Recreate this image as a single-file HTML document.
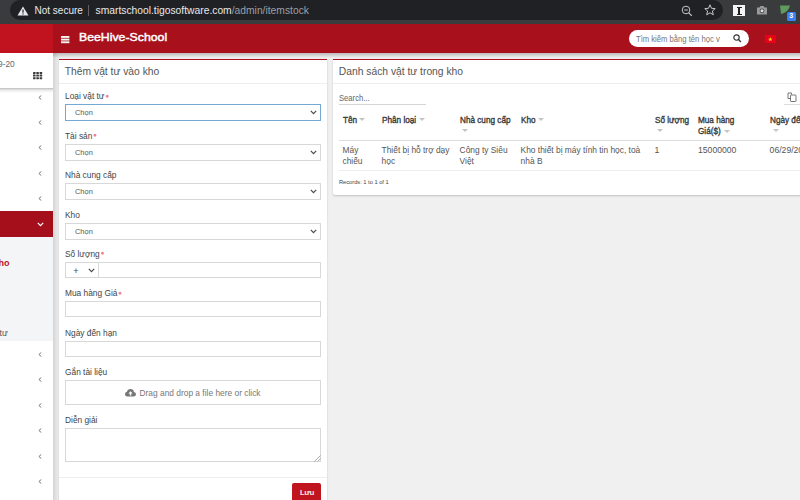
<!DOCTYPE html>
<html><head><meta charset="utf-8">
<style>
*{box-sizing:border-box;margin:0;padding:0}
html,body{width:800px;height:500px;overflow:hidden;background:#f0f0f0;font-family:"Liberation Sans",sans-serif;color:#555}
.a{position:absolute;white-space:nowrap}
.panel{background:#fff;border-top:1.5px solid #ad0f1d;border-radius:0 0 2px 2px;box-shadow:0 1px 2px rgba(0,0,0,.2)}
.sep{height:1px;background:#eee}
.lbl{font-size:8.3px;color:#444}
.req{color:#f08090;font-size:6.5px;position:relative;top:-1.5px;left:1px}
.inp{background:#fff;border:1px solid #d8d8d8;border-radius:0}
.sel{font-size:8px;color:#555}
.th{color:#383838;-webkit-text-stroke:.35px #383838;transform-origin:0 0}
.td{font-size:8.4px;color:#555;line-height:11.4px}
.caret{width:0;height:0;border-left:3px solid transparent;border-right:3px solid transparent;border-top:3px solid #c4c4c4}
</style></head><body>
<div class="a" style="left:0;top:0;width:800px;height:23.5px;background:#3a3b3c"></div>
<div class="a" style="left:10px;top:-0.5px;width:713px;height:20px;background:#202124;border-radius:10px"></div>
<svg class="a" style="left:17px;top:5.5px" width="12" height="10" viewBox="0 0 12 10"><path d="M6 0.5 L11.5 9.5 L0.5 9.5 Z" fill="#e8eaed"/><rect x="5.4" y="3.5" width="1.2" height="3.2" fill="#202124"/><rect x="5.4" y="7.4" width="1.2" height="1.1" fill="#202124"/></svg>
<div class="a" style="left:34.5px;top:5.09px;font-size:10px;color:#e8eaed;">Not secure</div>
<div class="a" style="left:88px;top:4.5px;width:1px;height:11px;background:#5f6368"></div>
<div class="a" style="left:95.5px;top:4.81px;font-size:10.3px;color:#e8eaed;">smartschool.tigosoftware.com<span style="color:#9aa0a6">/admin/itemstock</span></div>
<svg class="a" style="left:680.5px;top:4.5px" width="12" height="12" viewBox="0 0 12 12"><circle cx="5" cy="5" r="3.8" stroke="#c4c7c5" stroke-width="1" fill="none"/><line x1="3.2" y1="5" x2="6.8" y2="5" stroke="#c4c7c5" stroke-width="1"/><line x1="7.8" y1="7.8" x2="10.8" y2="10.8" stroke="#c4c7c5" stroke-width="1.2"/></svg>
<svg class="a" style="left:704px;top:4px" width="12" height="12" viewBox="0 0 12 12"><path d="M6 .8 L7.5 4.3 L11.2 4.6 L8.4 7 L9.3 10.8 L6 8.8 L2.7 10.8 L3.6 7 L.8 4.6 L4.5 4.3 Z" stroke="#c4c7c5" stroke-width="1" fill="none" stroke-linejoin="round"/></svg>
<div class="a" style="left:733px;top:5px;width:11.5px;height:11px;background:#f4f4f4"></div>
<div class="a" style="left:738.3px;top:6.5px;width:1.5px;height:8px;background:#222"></div>
<div class="a" style="left:736.5px;top:6.5px;width:5px;height:1px;background:#222"></div>
<div class="a" style="left:736.5px;top:13.8px;width:5px;height:1px;background:#222"></div>
<svg class="a" style="left:756px;top:5px" width="12" height="10" viewBox="0 0 12 10"><path d="M1 2.5 h2.5 l1-1.5 h3 l1 1.5 h2.5 v7 h-10 z" fill="#9a9a9a"/><circle cx="6" cy="5.8" r="2.4" fill="#4a4a4a"/><circle cx="6" cy="5.8" r="1.5" fill="#e0e0e0"/></svg>
<svg class="a" style="left:779px;top:5px" width="12" height="10" viewBox="0 0 12 10"><path d="M1 0.5 L11 0.5 Q9 8 2 9 Z" fill="#5f9a5f"/></svg>
<div class="a" style="left:787px;top:12px;width:8.5px;height:8.5px;background:#3b82f0;border-radius:1.5px;color:#fff;font-size:7px;line-height:8.5px;text-align:center;font-weight:bold">3</div>
<div class="a" style="left:0;top:23.5px;width:53px;height:29.5px;background:#c0131f"></div>
<div class="a" style="left:53px;top:23.5px;width:747px;height:29.5px;background:#a8111c"></div>
<svg class="a" style="left:61.2px;top:35.8px" width="9" height="8" viewBox="0 0 9 8"><rect x="0" y="0" width="8.4" height="1.9" fill="#f4f4f4"/><rect x="0" y="2.65" width="8.4" height="1.9" fill="#f4f4f4"/><rect x="0" y="5.3" width="8.4" height="1.9" fill="#f4f4f4"/></svg>
<div class="a" style="left:79.4px;top:30.12px;font-size:11.6px;color:#fff;-webkit-text-stroke:.45px #fff;transform:scaleX(1.06);transform-origin:0 0">BeeHive-School</div>
<div class="a" style="left:628.5px;top:30px;width:120px;height:16.5px;background:#fff;border-radius:9px"></div>
<div class="a" style="left:635.8px;top:33.99px;font-size:8.7px;color:#757575;transform:scaleX(.88);transform-origin:0 0">Tìm kiếm bằng tên học v</div>
<svg class="a" style="left:733px;top:33.5px" width="9" height="9" viewBox="0 0 9 9"><circle cx="3.5" cy="3.5" r="2.7" stroke="#333" stroke-width="1.15" fill="none"/><line x1="5.5" y1="5.5" x2="7.9" y2="7.9" stroke="#333" stroke-width="1.35"/></svg>
<div class="a" style="left:765px;top:34.8px;width:11.2px;height:8.2px;background:#e6001a"></div>
<svg class="a" style="left:768.4px;top:36.7px" width="4.6" height="4.6" viewBox="0 0 10 10"><path d="M5 0 L6.2 3.6 L10 3.6 L6.9 5.9 L8.1 9.5 L5 7.3 L1.9 9.5 L3.1 5.9 L0 3.6 L3.8 3.6 Z" fill="#ffde00"/></svg>
<div class="a" style="left:0;top:53px;width:53px;height:447px;background:#fff"></div>
<div class="a" style="left:53px;top:53px;width:6px;height:447px;background:linear-gradient(90deg,#d4d4d4,#f0f0f0)"></div>
<div class="a" style="left:0;top:88px;width:53px;height:4.5px;background:linear-gradient(rgba(0,0,0,.25),rgba(0,0,0,.07) 50%,rgba(0,0,0,0))"></div>
<div class="a" style="left:53px;top:53px;width:747px;height:5px;background:linear-gradient(rgba(0,0,0,.22),rgba(0,0,0,0))"></div>
<div class="a" style="left:-1.8px;top:58.50px;font-size:8.8px;color:#666;transform:scaleX(.95);transform-origin:0 0">9-20</div>
<svg class="a" style="left:32.7px;top:71.8px" width="10" height="8" viewBox="0 0 10 8"><g fill="#3a3a3a"><rect x="0.0" y="0.0" width="2.6" height="2" rx=".4"/><rect x="3.3" y="0.0" width="2.6" height="2" rx=".4"/><rect x="6.6" y="0.0" width="2.6" height="2" rx=".4"/><rect x="0.0" y="2.6" width="2.6" height="2" rx=".4"/><rect x="3.3" y="2.6" width="2.6" height="2" rx=".4"/><rect x="6.6" y="2.6" width="2.6" height="2" rx=".4"/><rect x="0.0" y="5.2" width="2.6" height="2" rx=".4"/><rect x="3.3" y="5.2" width="2.6" height="2" rx=".4"/><rect x="6.6" y="5.2" width="2.6" height="2" rx=".4"/></g></svg>
<svg class="a" style="left:37.7px;top:94.5px" width="4" height="5" viewBox="0 0 4 5"><path d="M3.3 .5 L.9 2.5 L3.3 4.5" stroke="#777" stroke-width="1" fill="none"/></svg>
<svg class="a" style="left:37.7px;top:119.7px" width="4" height="5" viewBox="0 0 4 5"><path d="M3.3 .5 L.9 2.5 L3.3 4.5" stroke="#777" stroke-width="1" fill="none"/></svg>
<svg class="a" style="left:37.7px;top:144.9px" width="4" height="5" viewBox="0 0 4 5"><path d="M3.3 .5 L.9 2.5 L3.3 4.5" stroke="#777" stroke-width="1" fill="none"/></svg>
<svg class="a" style="left:37.7px;top:170.9px" width="4" height="5" viewBox="0 0 4 5"><path d="M3.3 .5 L.9 2.5 L3.3 4.5" stroke="#777" stroke-width="1" fill="none"/></svg>
<svg class="a" style="left:37.7px;top:196.3px" width="4" height="5" viewBox="0 0 4 5"><path d="M3.3 .5 L.9 2.5 L3.3 4.5" stroke="#777" stroke-width="1" fill="none"/></svg>
<svg class="a" style="left:37.7px;top:351.8px" width="4" height="5" viewBox="0 0 4 5"><path d="M3.3 .5 L.9 2.5 L3.3 4.5" stroke="#777" stroke-width="1" fill="none"/></svg>
<svg class="a" style="left:37.7px;top:377.3px" width="4" height="5" viewBox="0 0 4 5"><path d="M3.3 .5 L.9 2.5 L3.3 4.5" stroke="#777" stroke-width="1" fill="none"/></svg>
<svg class="a" style="left:37.7px;top:402.8px" width="4" height="5" viewBox="0 0 4 5"><path d="M3.3 .5 L.9 2.5 L3.3 4.5" stroke="#777" stroke-width="1" fill="none"/></svg>
<svg class="a" style="left:37.7px;top:428.3px" width="4" height="5" viewBox="0 0 4 5"><path d="M3.3 .5 L.9 2.5 L3.3 4.5" stroke="#777" stroke-width="1" fill="none"/></svg>
<svg class="a" style="left:37.7px;top:453.8px" width="4" height="5" viewBox="0 0 4 5"><path d="M3.3 .5 L.9 2.5 L3.3 4.5" stroke="#777" stroke-width="1" fill="none"/></svg>
<svg class="a" style="left:37.7px;top:479.3px" width="4" height="5" viewBox="0 0 4 5"><path d="M3.3 .5 L.9 2.5 L3.3 4.5" stroke="#777" stroke-width="1" fill="none"/></svg>
<div class="a" style="left:0;top:211px;width:53px;height:26px;background:#a50f1c"></div>
<svg class="a" style="left:37px;top:222px" width="7" height="5" viewBox="0 0 7 5"><path d="M.8 .8 L3.5 3.6 L6.2 .8" stroke="#fff" stroke-width="1.2" fill="none"/></svg>
<div class="a" style="left:0;top:237px;width:53px;height:104px;background:#f4f5f7"></div>
<div class="a" style="left:-1.5px;top:257.71px;font-size:9px;color:#bd1424;font-weight:bold">ho</div>
<div class="a" style="left:-0.5px;top:327.99px;font-size:8.7px;color:#555;">tư</div>
<div class="a panel" style="left:59px;top:59px;width:268px;height:460px"></div>
<div class="a" style="left:64.8px;top:66.11px;font-size:10.3px;color:#555;">Thêm vật tư vào kho</div>
<div class="a sep" style="left:59px;top:83px;width:268px"></div>
<div class="a" style="left:64.8px;top:91.19px;font-size:8.7px;color:#444;transform:scaleX(.96);transform-origin:0 0">Loại vật tư<span class="req">●</span></div>
<div class="a inp" style="left:64.6px;top:104.2px;width:256.2px;height:16.4px;border-color:#74a9d6"></div>
<div class="a" style="left:74.5px;top:107.63px;font-size:8px;color:#555;transform:scaleX(.93);transform-origin:0 0">Chọn</div>
<svg class="a" style="left:310.4px;top:109.7px" width="7" height="5" viewBox="0 0 7 5"><path d="M.8 .9 L3.5 3.7 L6.2 .9" stroke="#4a4a4a" stroke-width="1.2" fill="none"/></svg>
<div class="a" style="left:64.8px;top:130.99px;font-size:8.7px;color:#444;transform:scaleX(.96);transform-origin:0 0">Tài sản<span class="req">●</span></div>
<div class="a inp" style="left:64.6px;top:144.2px;width:256.2px;height:16.4px;border-color:#d8d8d8"></div>
<div class="a" style="left:74.5px;top:147.63px;font-size:8px;color:#555;transform:scaleX(.93);transform-origin:0 0">Chọn</div>
<svg class="a" style="left:310.4px;top:149.7px" width="7" height="5" viewBox="0 0 7 5"><path d="M.8 .9 L3.5 3.7 L6.2 .9" stroke="#4a4a4a" stroke-width="1.2" fill="none"/></svg>
<div class="a" style="left:64.8px;top:169.99px;font-size:8.7px;color:#444;transform:scaleX(.96);transform-origin:0 0">Nhà cung cấp</div>
<div class="a inp" style="left:64.6px;top:183.3px;width:256.2px;height:16.4px;border-color:#d8d8d8"></div>
<div class="a" style="left:74.5px;top:186.73px;font-size:8px;color:#555;transform:scaleX(.93);transform-origin:0 0">Chọn</div>
<svg class="a" style="left:310.4px;top:188.8px" width="7" height="5" viewBox="0 0 7 5"><path d="M.8 .9 L3.5 3.7 L6.2 .9" stroke="#4a4a4a" stroke-width="1.2" fill="none"/></svg>
<div class="a" style="left:64.8px;top:209.99px;font-size:8.7px;color:#444;transform:scaleX(.96);transform-origin:0 0">Kho</div>
<div class="a inp" style="left:64.6px;top:223.2px;width:256.2px;height:16.4px;border-color:#d8d8d8"></div>
<div class="a" style="left:74.5px;top:226.63px;font-size:8px;color:#555;transform:scaleX(.93);transform-origin:0 0">Chọn</div>
<svg class="a" style="left:310.4px;top:228.7px" width="7" height="5" viewBox="0 0 7 5"><path d="M.8 .9 L3.5 3.7 L6.2 .9" stroke="#4a4a4a" stroke-width="1.2" fill="none"/></svg>
<div class="a" style="left:64.8px;top:248.99px;font-size:8.7px;color:#444;transform:scaleX(.96);transform-origin:0 0">Số lượng<span class="req">●</span></div>
<div class="a inp" style="left:64.6px;top:262.2px;width:256.2px;height:15.6px"></div>
<div class="a" style="left:98.3px;top:262.7px;width:1px;height:14.6px;background:#d8d8d8"></div>
<div class="a" style="left:73.3px;top:265.71px;font-size:9px;color:#444;">+</div>
<svg class="a" style="left:88.1px;top:267.8px" width="7" height="5" viewBox="0 0 7 5"><path d="M.8 .9 L3.5 3.7 L6.2 .9" stroke="#4a4a4a" stroke-width="1.2" fill="none"/></svg>
<div class="a" style="left:64.8px;top:288.19px;font-size:8.7px;color:#444;transform:scaleX(.96);transform-origin:0 0">Mua hàng Giá<span class="req">●</span></div>
<div class="a inp" style="left:64.6px;top:301.4px;width:256.2px;height:16px"></div>
<div class="a" style="left:64.8px;top:327.79px;font-size:8.7px;color:#444;transform:scaleX(.96);transform-origin:0 0">Ngày đến hạn</div>
<div class="a inp" style="left:64.6px;top:341.2px;width:256.2px;height:15.4px"></div>
<div class="a" style="left:64.8px;top:367.39px;font-size:8.7px;color:#444;transform:scaleX(.96);transform-origin:0 0">Gắn tài liệu</div>
<div class="a inp" style="left:64.6px;top:380.2px;width:256.2px;height:24.6px"></div>
<svg class="a" style="left:125px;top:388.5px" width="11" height="8" viewBox="0 0 11 8"><path d="M2.5 7.5 Q0 7.5 0 5 Q0 3 2 2.8 Q2.5 0 5.5 0 Q8.5 0 9 3 Q11 3.3 11 5.3 Q11 7.5 8.5 7.5 Z" fill="#777"/><path d="M5.5 2.2 L3.4 4.4 H4.8 V6.4 H6.2 V4.4 H7.6 Z" fill="#fff"/></svg>
<div class="a" style="left:139.5px;top:388.26px;font-size:8.4px;color:#777;">Drag and drop a file here or click</div>
<div class="a" style="left:64.8px;top:414.79px;font-size:8.7px;color:#444;transform:scaleX(.96);transform-origin:0 0">Diễn giải</div>
<div class="a inp" style="left:64.6px;top:428.4px;width:256.2px;height:34px"></div>
<svg class="a" style="left:313.5px;top:454.5px" width="7" height="7" viewBox="0 0 7 7"><path d="M6.5 .5 L.5 6.5 M6.5 3.5 L3.5 6.5" stroke="#8a8a8a" stroke-width=".7"/></svg>
<div class="a sep" style="left:59px;top:477px;width:268px"></div>
<div class="a" style="left:292.2px;top:483.2px;width:29px;height:20px;background:#c0141f;border-radius:2px"></div>
<div class="a" style="left:300px;top:488.23px;font-size:8px;color:#fff;-webkit-text-stroke:.2px #fff">Lưu</div>
<div class="a panel" style="left:333px;top:59px;width:480px;height:136px"></div>
<div class="a" style="left:338.8px;top:66.11px;font-size:10.3px;color:#555;">Danh sách vật tư trong kho</div>
<div class="a sep" style="left:333px;top:83px;width:467px"></div>
<div class="a" style="left:339px;top:93.17px;font-size:8.5px;color:#666;transform:scaleX(.9);transform-origin:0 0">Search...</div>
<div class="a" style="left:339px;top:104px;width:87px;height:1px;background:#d6d6d6"></div>
<div class="a th" style="left:342.5px;top:114.70px;font-size:8.8px;transform:scaleX(0.93)">Tên</div>
<div class="a caret" style="left:358.5px;top:118.3px"></div>
<div class="a th" style="left:381.6px;top:114.70px;font-size:8.8px;transform:scaleX(0.93)">Phân loại</div>
<div class="a caret" style="left:419px;top:118.3px"></div>
<div class="a th" style="left:459.6px;top:114.70px;font-size:8.8px;transform:scaleX(0.93)">Nhà cung cấp</div>
<div class="a caret" style="left:461.7px;top:129.3px"></div>
<div class="a th" style="left:520.6px;top:114.70px;font-size:8.8px;transform:scaleX(0.93)">Kho</div>
<div class="a caret" style="left:537.5px;top:118.3px"></div>
<div class="a th" style="left:654.6px;top:114.70px;font-size:8.8px;transform:scaleX(0.93)">Số lượng</div>
<div class="a caret" style="left:656.5px;top:129.3px"></div>
<div class="a th" style="left:698px;top:114.70px;font-size:8.8px;transform:scaleX(0.93)">Mua hàng</div>
<div class="a th" style="left:698px;top:126.30px;font-size:8.8px;transform:scaleX(0.93)">Giá($)</div>
<div class="a caret" style="left:723.5px;top:129.8px"></div>
<div class="a th" style="left:769.6px;top:114.70px;font-size:8.8px;transform:scaleX(0.93)">Ngày đến hạn</div>
<div class="a caret" style="left:772.5px;top:129.3px"></div>
<div class="a" style="left:339px;top:140px;width:461px;height:1px;background:#ddd"></div>
<div class="a td" style="left:342.5px;top:144.59px;font-size:8.4px">Máy<br>chiếu</div>
<div class="a td" style="left:381.6px;top:144.59px;font-size:8.4px">Thiết bị hỗ trợ dạy<br>học</div>
<div class="a td" style="left:459.6px;top:144.59px;font-size:8.4px">Công ty Siêu<br>Việt</div>
<div class="a td" style="left:520.6px;top:144.59px;font-size:8.4px">Kho thiết bị máy tính tin học, toà<br>nhà B</div>
<div class="a td" style="left:654.6px;top:144.79px;font-size:8.7px">1</div>
<div class="a td" style="left:698px;top:144.80px;font-size:8.65px">15000000</div>
<div class="a td" style="left:769.6px;top:144.80px;font-size:8.65px">06/29/2020</div>
<div class="a" style="left:339px;top:170px;width:461px;height:1px;background:#eee"></div>
<div class="a" style="left:339px;top:179.15px;font-size:5.7px;color:#444;">Records: 1 to 1 of 1</div>
<div class="a" style="left:783.5px;top:103.8px;width:17px;height:1px;background:#ddd"></div>
<svg class="a" style="left:786.5px;top:92px" width="10" height="10" viewBox="0 0 10 10"><path d="M4.5 2.5 V1 H1 V6.5 H3.2" fill="none" stroke="#555" stroke-width=".8"/><rect x="3.5" y="3" width="5.5" height="6.5" rx=".6" fill="none" stroke="#555" stroke-width=".8"/></svg>
</body></html>
